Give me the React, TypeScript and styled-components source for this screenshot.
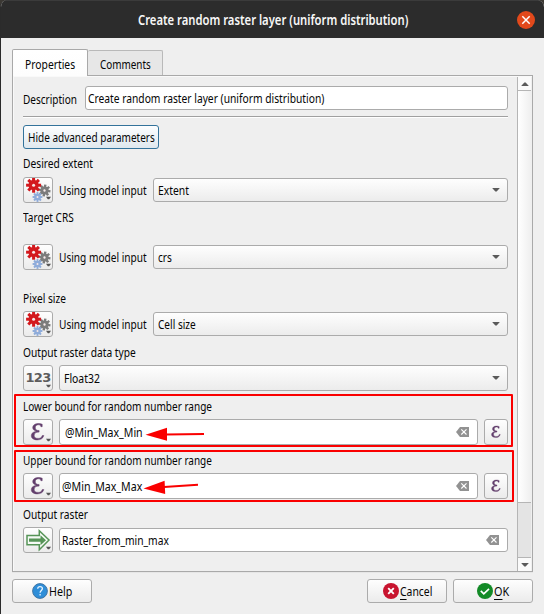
import React, { useLayoutEffect, useRef, useState } from 'react';
import styled, { createGlobalStyle, css } from 'styled-components';

const GlobalStyle = createGlobalStyle`
  * { box-sizing: border-box; }
  body { margin: 0; background: #efefef; font-family: "Noto Sans", "Open Sans", sans-serif; font-size: 13px; color: #050505; }
  button, input { font: inherit; color: inherit; }
`;

/* ---------- condensed text ---------- */
const TextBox = styled.span<{ $w: number; $bold?: boolean }>`
  display: inline-block;
  flex: none;
  width: ${(p) => p.$w}px;
  height: 18px;
  line-height: 18px;
  white-space: nowrap;
  text-align: left;
  ${(p) => p.$bold && css`font-weight: 600; font-size: 14px; color: #f7f7f7;`}
`;
const TextInner = styled.span`
  display: inline-block;
  transform-origin: 0 50%;
`;

function Text({ w, bold, children }: { w: number; bold?: boolean; children: React.ReactNode }) {
  const ref = useRef<HTMLSpanElement>(null);
  const [scale, setScale] = useState(1);
  useLayoutEffect(() => {
    const natural = ref.current?.offsetWidth;
    if (natural) setScale(w / natural);
  }, [w]);
  return (
    <TextBox $w={w} $bold={bold}>
      <TextInner ref={ref} style={{ transform: `scaleX(${scale})` }}>{children}</TextInner>
    </TextBox>
  );
}

/* ---------- window ---------- */
const Backdrop = styled.div`
  background: #3b3833;
  height: 614px;
  width: 544px;
  overflow: hidden;
`;
const Window = styled.div`
  display: flex;
  flex-direction: column;
  height: 614px;
  background: #efefef;
  border-left: 1px solid #2b2b2b;
  border-radius: 7px 7px 0 0;
  overflow: hidden;
`;
const TitleBar = styled.header`
  height: 38px;
  flex: none;
  display: grid;
  grid-template-columns: 1fr auto 1fr;
  align-items: center;
  background: #2c2c2c;
  border-top: 1px solid #3b3b3b;
  padding: 0 9px 0 10px;
`;
const CloseButton = styled.button`
  grid-column: 3;
  justify-self: end;
  width: 18px;
  height: 18px;
  padding: 0;
  border: 0;
  border-radius: 50%;
  background: #e2491b;
  svg { display: block; }
`;
const TitleText = styled.div`
  grid-column: 2;
  display: flex;
`;
const Tabs = styled.div`
  display: flex;
  align-items: flex-end;
  height: 38px;
  flex: none;
  padding-left: 11px;
  position: relative;
  z-index: 1;
  margin-bottom: -1px;
`;
const Tab = styled.div<{ $active?: boolean }>`
  display: flex;
  justify-content: center;
  align-items: center;
  width: 75px;
  height: 25px;
  margin-bottom: 1px;
  padding-top: 2px;
  background: #e7e7e7;
  border: 1px solid #b9b9b9;
  border-left: 0;
  border-bottom: 0;
  border-radius: 2px 2px 0 0;
  ${(p) => p.$active && css`
    width: 76px;
    height: 27px;
    margin-bottom: 0;
    padding: 1px 0 0;
    background: linear-gradient(#fff, #fdfdfd);
    border-left: 1px solid #a9a9a9;
    border-color: #a9a9a9;
  `}
`;
const Frame = styled.main`
  display: flex;
  height: 497px;
  flex: none;
  margin: 0 11px 0 11px;
  border: 1px solid #a9a9a9;
  box-shadow: inset 1px 1px 0 #f9f9f9, 0 1px 0 #e6e6e6;
`;
const Content = styled.div`
  width: 504px;
  flex: none;
  padding: 10px 9px 0 10px;
`;

/* ---------- controls ---------- */
const Row = styled.div`
  display: flex;
  align-items: center;
  height: 26px;
  gap: 6px;
`;
const DescriptionRow = styled(Row)`
  height: 24px;
  gap: 8px;
  > ${TextBox} { margin-top: 1px; }
`;
const Divider = styled.div`
  height: 2px;
  margin: 6px 0 7px;
  border-top: 1px solid #a0a0a0;
  background: #fff;
`;
const Section = styled.section<{ $top?: number; $gap?: number }>`
  margin-top: ${(p) => p.$top ?? 6}px;
  display: flex;
  flex-direction: column;
  gap: ${(p) => p.$gap ?? 4}px;
`;
const Field = styled.div<{ $tall?: boolean; $pad?: number }>`
  display: flex;
  flex: 1;
  align-items: center;
  justify-content: space-between;
  height: ${(p) => (p.$tall ? 26 : 24)}px;
  padding: 0 7px 0 ${(p) => p.$pad ?? 2}px;
  background: #fff;
  border: 1px solid #ababab;
  border-radius: 3px;
`;
const Select = styled(Field)`
  padding: 0 7px 0 4px;
  background: linear-gradient(#fefefe, #ececec);
`;
const Button = styled.button<{ $w: number; $focus?: boolean }>`
  display: flex;
  align-items: center;
  justify-content: center;
  gap: 1px;
  width: ${(p) => p.$w}px;
  height: 24px;
  padding: 0;
  background: linear-gradient(#fefefe, #ebebeb);
  border: 1px solid #ababab;
  border-radius: 3px;
  svg { flex: none; }
  ${(p) => p.$focus && css`
    border-color: #33739b;
    background: linear-gradient(#fdfeff, #dfe8ee);
  `}
`;
const ToolButton = styled(Button)`
  height: 26px;
  flex: none;
`;
const Mnemonic = styled.span`
  text-decoration: underline;
  text-underline-offset: 3px;
  text-decoration-thickness: 1px;
`;
const Footer = styled.footer`
  display: flex;
  gap: 6px;
  margin: 7px 11px 0;
`;
const Spacer = styled.div`
  flex: 1;
`;

/* ---------- scrollbar ---------- */
const Scrollbar = styled.div`
  display: flex;
  flex-direction: column;
  width: 14px;
  margin-top: 1px;
  background: #e4e4e4;
  border-left: 1px solid #b5b5b5;
`;
const ScrollEnd = styled.div`
  display: flex;
  justify-content: center;
  align-items: center;
  height: 13px;
  flex: none;
  background: #fafafa;
`;
const Thumb = styled.div`
  height: 413px;
  flex: none;
  background: linear-gradient(90deg, #fff, #efefef);
  border: solid #b5b5b5;
  border-width: 1px 0;
`;
const Groove = styled.div`
  flex: 1;
  border-bottom: 1px solid #b5b5b5;
`;

/* ---------- annotations over the form ---------- */
const Highlight = styled.div<{ $y: number; $w: number; $h: number }>`
  position: absolute;
  left: 14px;
  top: ${(p) => p.$y}px;
  width: ${(p) => p.$w}px;
  height: ${(p) => p.$h}px;
  border: 2px solid #fa0000;
  border-radius: 1px;
  pointer-events: none;
  z-index: 2;
`;
const Arrows = styled.svg`
  position: absolute;
  left: 140px;
  top: 420px;
  z-index: 2;
  pointer-events: none;
`;

/* ---------- icons ---------- */
function Gear({ x, y, r, color, turn = 0 }: { x: number; y: number; r: number; color: string; turn?: number }) {
  return (
    <g transform={`translate(${x} ${y}) rotate(${turn})`}>
      {[0, 45, 90, 135].map((a) => (
        <rect key={a} x={-r * 0.2} y={-r} width={r * 0.4} height={r * 2} fill={color} transform={`rotate(${a})`} />
      ))}
      <circle r={r * 0.68} fill={color} />
      <circle r={r * 0.2} fill="#f6e9e9" />
    </g>
  );
}
const MenuCaret = () => <path d="M22 18.8h5l-1.8 2.4h-1.4z" fill="#555" />;

function GearsButton() {
  return (
    <ToolButton $w={30}>
      <svg width="28" height="24" viewBox="0 0 28 24">
        <Gear x={20.5} y={12.5} r={6} color="#7c7c7c" turn={8} />
        <Gear x={13.5} y={19} r={4.9} color="#8facda" />
        <Gear x={9.6} y={7.2} r={7.5} color="#d3191d" />
        <MenuCaret />
      </svg>
    </ToolButton>
  );
}
const Epsilon = () => (
  <path
    d="M18.2 6.7V4.2C16.8 3.5 15.2 3.3 13.6 3.5C10.3 3.9 8.7 5.5 8.7 7.6C8.7 9.4 10 10.7 12.4 11.2C9 11.8 7.3 13.4 7.3 15.7C7.3 18.4 9.7 19.9 13.3 19.9C16.7 19.9 19.2 18.4 19.8 15.5H18.3C17.8 17.6 16.2 18.4 14.1 18.4C11.5 18.4 10.2 17.4 10.2 15.4C10.2 13.2 11.8 12.1 15.1 12.1V10.5C12.5 10.6 11.3 9.6 11.3 7.8C11.3 5.8 12.5 4.8 14.5 4.8C15.8 4.8 16.6 5.4 16.9 6.7Z"
    fill="#623e6c"
    stroke="#623e6c"
    strokeWidth=".5"
  />
);
const EpsilonMenuButton = () => (
  <ToolButton $w={30}>
    <svg width="28" height="24" viewBox="0 0 28 24"><Epsilon /><MenuCaret /></svg>
  </ToolButton>
);
const ExpressionButton = () => (
  <ToolButton $w={24}>
    <svg width="22" height="24" viewBox="0 0 22 24">
      <g transform="translate(1.4 3.6) scale(.7)"><Epsilon /></g>
    </svg>
  </ToolButton>
);
const Numbers = styled.span`
  font: bold 13px "DejaVu Sans", sans-serif;
  letter-spacing: -0.7px;
  color: #5c5c5c;
  margin: -2px 0 0 0;
  width: 26px;
`;
const CaretOverlay = styled.svg`
  position: absolute;
  left: 0;
  top: 0;
`;
const NumberButton = styled(ToolButton)`
  position: relative;
`;
const Caret = ({ up }: { up?: boolean }) => (
  <svg width="8" height="4" viewBox="0 0 8 4">
    <path d={up ? 'M0.2 4L3.3 0.5h1.4L7.8 4z' : 'M0.2 0h7.6L4.7 3.6H3.3z'} fill="#5a5a5a" />
  </svg>
);
const ClearIcon = () => (
  <svg width="14" height="10" viewBox="0 0 14 10">
    <path d="M4 0h9v10H4L0 5z" fill="#929292" />
    <path d="M5.3 2.3l5.2 5.2M10.5 2.3L5.3 7.5" stroke="#fff" strokeWidth="1.1" />
  </svg>
);

const ModelInput = ({ value, w }: { value: string; w: number }) => (
  <Row>
    <GearsButton />
    <Text w={88}>Using model input</Text>
    <Select><Text w={w}>{value}</Text><Caret /></Select>
  </Row>
);
const BoundInput = ({ value, w, pad }: { value: string; w: number; pad: number }) => (
  <Row>
    <EpsilonMenuButton />
    <Field $tall $pad={pad}><Text w={w}>{value}</Text><ClearIcon /></Field>
    <ExpressionButton />
  </Row>
);

export default function App() {
  return (
    <Backdrop>
      <GlobalStyle />
      <Window>
        <TitleBar>
          <TitleText><Text w={270} bold>Create random raster layer (uniform distribution)</Text></TitleText>
          <CloseButton aria-label="Close">
            <svg width="18" height="18" viewBox="0 0 18 18">
              <path d="M5.3 5.3l7.4 7.4M12.7 5.3l-7.4 7.4" stroke="#fff" strokeWidth="1.5" />
            </svg>
          </CloseButton>
        </TitleBar>
        <Tabs>
          <Tab $active><Text w={50}>Properties</Text></Tab>
          <Tab><Text w={51}>Comments</Text></Tab>
        </Tabs>
        <Frame>
          <Content>
            <DescriptionRow>
              <Text w={54}>Description</Text>
              <Field><Text w={236}>Create random raster layer (uniform distribution)</Text></Field>
            </DescriptionRow>
            <Divider />
            <Button $w={136} $focus><Text w={127}>Hide advanced parameters</Text></Button>
            <Section $top={5} $gap={5}>
              <Text w={70}>Desired extent</Text>
              <ModelInput value="Extent" w={31} />
            </Section>
            <Section $top={5} $gap={18}>
              <Text w={51}>Target CRS</Text>
              <ModelInput value="crs" w={14} />
            </Section>
            <Section $top={19}>
              <Text w={43}>Pixel size</Text>
              <ModelInput value="Cell size" w={38} />
            </Section>
            <Section>
              <Text w={113}>Output raster data type</Text>
              <Row>
                <NumberButton $w={30}>
                  <Numbers>123</Numbers>
                  <CaretOverlay width="28" height="24" viewBox="0 0 28 24"><MenuCaret /></CaretOverlay>
                </NumberButton>
                <Select $tall><Text w={36}>Float32</Text><Caret /></Select>
              </Row>
            </Section>
            <Section>
              <Text w={189}>Lower bound for random number range</Text>
              <BoundInput value="@Min_Max_Min" w={78} pad={5} />
            </Section>
            <Section>
              <Text w={189}>Upper bound for random number range</Text>
              <BoundInput value="@Min_Max_Max" w={80} pad={2} />
            </Section>
            <Section>
              <Text w={65}>Output raster</Text>
              <Row>
                <ToolButton $w={30}>
                  <svg width="28" height="24" viewBox="0 0 28 24">
                    <path d="M3 7.5h12.3V2.8L25 12l-9.7 9.7v-4.9H3z" fill="#f5faf5" stroke="#569457" strokeWidth="1.5" />
                    <path d="M5 10.5h11.5V7.3L22 12.2l-5.5 5v-3.5H5z" fill="#569457" />
                    <MenuCaret />
                  </svg>
                </ToolButton>
                <Field><Text w={107}>Raster_from_min_max</Text><ClearIcon /></Field>
              </Row>
            </Section>
          </Content>
          <Scrollbar>
            <ScrollEnd><Caret up /></ScrollEnd>
            <Thumb />
            <Groove />
            <ScrollEnd><Caret /></ScrollEnd>
          </Scrollbar>
        </Frame>
        <Footer>
          <Button $w={80}>
            <svg width="16" height="16" viewBox="0 0 16 16">
              <circle cx="8" cy="8" r="7.4" fill="#2f8ed8" stroke="#3b6f9e" strokeWidth=".9" />
              <path d="M5.7 5.7C5.8 4.3 6.7 3.6 8 3.6C9.5 3.6 10.4 4.4 10.4 5.6C10.4 7.4 8.1 7.5 8.1 9.7M8.1 11v1.5" fill="none" stroke="#e9f5ff" strokeWidth="1.3" />
            </svg>
            <Text w={23}>Help</Text>
          </Button>
          <Spacer />
          <Button $w={80}>
            <svg width="16" height="16" viewBox="0 0 16 16">
              <circle cx="8" cy="8" r="8" fill="#c8142f" />
              <path d="M5.2 5.2l5.6 5.6M10.8 5.2l-5.6 5.6" stroke="#fff" strokeWidth="1.9" />
            </svg>
            <Text w={32}><Mnemonic>C</Mnemonic>ancel</Text>
          </Button>
          <Button $w={80}>
            <svg width="16" height="16" viewBox="0 0 16 16">
              <circle cx="8" cy="8" r="8" fill="#138a27" />
              <path d="M3.8 7.8l3 3 5.2-5" fill="none" stroke="#fff" strokeWidth="1.7" />
            </svg>
            <Text w={15}><Mnemonic>O</Mnemonic>K</Text>
          </Button>
        </Footer>
      </Window>
      <Highlight $y={394} $w={499} $h={53} />
      <Highlight $y={450} $w={500} $h={52} />
      <Arrows width="70" height="80" viewBox="0 0 70 80">
        <path d="M26 14.5L64 13.9" stroke="#fa0000" strokeWidth="2" />
        <path d="M5.5 14.8L27 7.8v13z" fill="#fa0000" />
        <path d="M24 67L58 64.8" stroke="#fa0000" strokeWidth="2" />
        <path d="M3.5 68.6L24.6 60.7l.6 13.2z" fill="#fa0000" />
      </Arrows>
    </Backdrop>
  );
}
